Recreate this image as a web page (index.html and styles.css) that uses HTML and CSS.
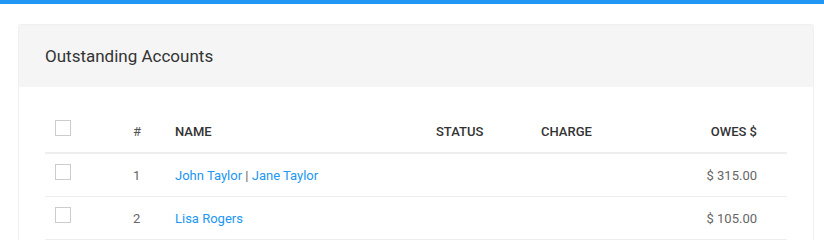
FILE: index.html
```html
<!DOCTYPE html>
<html>
<head>
<meta charset="utf-8">
<link rel="stylesheet" href="styles.css">
</head>
<body>
<div class="topbar"></div>
<div class="page">
  <div class="card">
    <div class="card-header">Outstanding Accounts</div>
    <div class="card-body">
      <div class="table">
        <div class="row head">
          <div class="cell"><span class="check"></span></div>
          <div class="cell hash">#</div>
          <div class="cell">NAME</div>
          <div class="cell">STATUS</div>
          <div class="cell">CHARGE</div>
          <div class="cell right">OWES $</div>
        </div>
        <div class="row">
          <div class="cell"><span class="check"></span></div>
          <div class="cell num">1</div>
          <div class="cell"><a class="link">John Taylor</a> <span class="sep">|</span> <a class="link">Jane Taylor</a></div>
          <div class="cell"></div>
          <div class="cell"></div>
          <div class="cell right amt">$ 315.00</div>
        </div>
        <div class="row">
          <div class="cell"><span class="check"></span></div>
          <div class="cell num">2</div>
          <div class="cell"><a class="link">Lisa Rogers</a></div>
          <div class="cell"></div>
          <div class="cell"></div>
          <div class="cell right amt">$ 105.00</div>
        </div>
      </div>
    </div>
  </div>
</div>
</body>
</html>
```
FILE: styles.css
```css
html, body {
  margin: 0;
  padding: 0;
  background: #fff;
  font-family: Roboto, "Liberation Sans", sans-serif;
  color: #333;
  overflow: hidden;
}
.topbar {
  height: 4px;
  background: #2196f3;
}
.page {
  padding: 20px 10px 0 18px;
}
.card {
  border: 1px solid #f0f0f0;
  border-bottom: none;
  border-radius: 3px 3px 0 0;
}
.card-header {
  background: #f5f5f5;
  height: 62px;
  box-sizing: border-box;
  padding: 0 26px;
  display: flex;
  align-items: center;
  font-size: 17px;
  color: #333;
}
.card-body {
  padding: 23px 26px 0 26px;
}
.table {
  width: 742px;
}
.row {
  display: grid;
  grid-template-columns: 78px 42px 261px 105px 100px 1fr;
  height: 43px;
  align-items: center;
  border-bottom: 1px solid #eee;
  box-sizing: border-box;
  font-size: 13px;
}
.row.head {
  height: 44px;
  border-bottom: 2px solid #eee;
  font-weight: 500;
  color: #333;
}
.row.head .hash {
  font-weight: 400;
  color: #555;
}
.cell {
  padding: 0 10px;
}
.cell.right {
  text-align: right;
  padding-right: 30px;
}
.check {
  display: block;
  width: 16px;
  height: 16px;
  box-sizing: border-box;
  border: 1px solid #ccc;
  background: #fff;
  margin-top: -7px;
}
.num, .amt {
  color: #666;
}
.link {
  color: #2196f3;
  text-decoration: none;
}
.sep {
  color: #666;
}
```
